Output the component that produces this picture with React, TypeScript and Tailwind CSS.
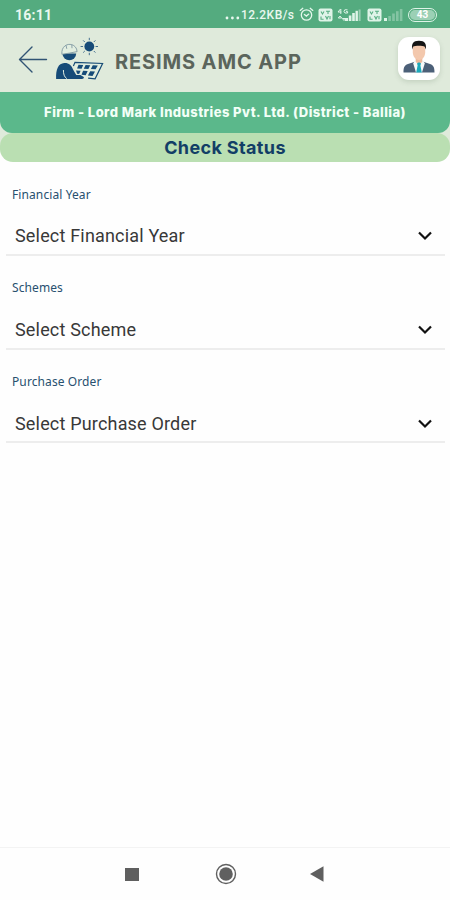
import React from 'react';

interface SelectFieldProps {
  label: string;
  placeholder: string;
}

const fields: SelectFieldProps[] = [
  { label: 'Financial Year', placeholder: 'Select Financial Year' },
  { label: 'Schemes', placeholder: 'Select Scheme' },
  { label: 'Purchase Order', placeholder: 'Select Purchase Order' },
];

function AlarmIcon() {
  return (
    <svg width="15" height="15" viewBox="0 0 15 15" fill="none" stroke="#e4f7ec" strokeWidth="1.3" strokeLinecap="round">
      <circle cx="7.5" cy="8" r="5.2" />
      <path d="M1.2 3.4 3.8 1.3M13.8 3.4l-2.6-2.1M5.4 7.4l2 1.7 2.4-2" />
    </svg>
  );
}

function VolteIcon() {
  return (
    <svg width="15" height="14" viewBox="0 0 15 14">
      <rect x="0.5" y="0.5" width="14" height="13" rx="2" fill="#dff4e8" />
      <path d="M3 3.5 4.5 6 6 3.5M8 3.3h4M10 3.3V6M3 8.5v2.8h2.6M7.5 8l1.5 3 1.5-3M12 8v3.3" fill="none" stroke="#57ae82" strokeWidth="1.1" />
    </svg>
  );
}

function StatusBar() {
  return (
    <div className="flex h-7 items-center bg-[#54ab7f] pl-[15px] pr-[13px] font-['Roboto',sans-serif] text-[#e9f8ef]">
      <span className="pt-[2px] text-[14px] font-bold tracking-[0.25px]">16:11</span>
      <div className="ml-auto flex items-center pt-px">
        <svg width="16" height="12" viewBox="0 0 16 12" fill="#e9f8ef">
          <circle cx="2" cy="9" r="1.4" />
          <circle cx="7.4" cy="9" r="1.4" />
          <circle cx="12.8" cy="9" r="1.4" />
        </svg>
        <span className="mr-[3px] w-[55px] whitespace-nowrap text-[12px] font-medium tracking-[0.45px]">12.2KB/s</span>
        <AlarmIcon />
        <span className="ml-1 flex"><VolteIcon /></span>
        <span className="ml-1 flex">
          <svg width="25" height="14" viewBox="0 0 25 14" fill="#dff4e8">
            <path d="M3.5 1 1 4h3.4M3.8 1v5M10.5 1.8H7.8L7 3.4 8 5h2.6V3.6H9M3 8l-1.7 2H4.7zM7 12.5l-1.7-2H8.7z" fill="none" stroke="#dff4e8" strokeWidth="1" />
            <rect x="8" y="10" width="3" height="3" />
            <rect x="11.8" y="7.5" width="2.6" height="5.5" />
            <rect x="15.2" y="5" width="2.6" height="8" />
            <rect x="18.5" y="2.8" width="2.4" height="10.2" />
            <rect x="21.6" y="1.5" width="2" height="11.5" opacity="0.5" />
          </svg>
        </span>
        <span className="ml-[5px] flex"><VolteIcon /></span>
        <span className="ml-[2px] flex">
          <svg width="19" height="12" viewBox="0 0 19 12" fill="#dff4e8">
            <rect x="0" y="9" width="3" height="3" />
            <g opacity="0.35">
              <rect x="4.3" y="7" width="2.6" height="5" />
              <rect x="8.2" y="4.5" width="2.6" height="7.5" />
              <rect x="12" y="2.2" width="2.6" height="9.8" />
              <rect x="15.8" y="0" width="2.6" height="12" />
            </g>
          </svg>
        </span>
        <span className="ml-[5px] flex h-[14px] w-[29px] items-center justify-center rounded-full border border-[#dff4e8] p-px">
          <span className="flex h-full w-full items-center justify-center rounded-full bg-[#9bd0b5] text-[10px] font-bold leading-none text-white">43</span>
        </span>
      </div>
    </div>
  );
}

// worker holding a solar panel under the sun
function AppLogo() {
  return (
    <svg width="50" height="46" viewBox="0 0 50 46" fill="#164b78">
      <circle cx="34.3" cy="9.5" r="4.9" />
      <path d="M34.3.8v2.4M34.3 15.8v2.4M25.6 9.5H28M40.6 9.5H43M28.2 3.4l1.6 1.6M38.8 14l1.6 1.6M28.2 15.6l1.6-1.6M38.8 5l1.6-1.6" stroke="#47718f" strokeWidth="1" />
      <path d="M7.5 16.5a6.8 6.8 0 0 0 13.7 0z" />
      <path d="M6.9 17.3C5.7 4.7 21.5 4.4 22.1 14.6l-7.6 1.5z" fill="#e2eee0" stroke="#7f98a2" strokeWidth="0.9" />
      <path d="M11 8.2l.8 3.6M16.8 7.6l.2 3.6" stroke="#8aa1a8" strokeWidth="1" />
      <path d="M1.1 42C.8 32 3.3 26.4 9.3 26c4.6-.2 7.1 2 8.9 6.8l3 5.2H27c2.6 0 2.6 4 0 4z" />
      <path d="M8.4 33c0 4 .8 7 3.4 8.6" stroke="#e2eee0" strokeWidth="1" fill="none" />
      <path d="m17.8 25.2 29.8 1.3-7.5 15.3-9.5-.8-7.4-4.3z" fill="#e2eee0" />
      <path d="m18.4 29 1.6-3.7 27.6 1.2-7.5 15.3-7-.6" fill="none" stroke="#174c76" strokeWidth="1.2" />
      <path d="m23.5 27.8 4.7.2-1.6 3.7-4.5-.2zM30.6 28l4.6.2-1.8 3.7-4.6-.2zM37.8 28.3l5 .2-2.2 3.7-4.7-.2zM21 33.5l4.6.2-1.5 3.3-2-.2zM28.1 33.8l4.6.2-2 4.2-4.2-.5zM35.2 34.2l4.8.2-2.5 4.5-4.6-.4z" />
    </svg>
  );
}

function Avatar() {
  return (
    <div className="mb-[3px] flex h-[43px] w-[42px] items-end justify-center rounded-[11px] bg-white pb-[7px] shadow-[0_2px_5px_rgba(70,100,70,0.18)]">
      <svg width="32" height="33" viewBox="0 0 32 33">
        <path d="M.5 32.5c-.2-6 1.6-8 6-9l6-2h7l6 2c4.4 1 6.2 3 6 9z" fill="#4c6078" />
        <path d="m12 20.5-1.8 3 2.8 9h6l2.8-9-1.8-3z" fill="#f7fafa" />
        <path d="M12.7 17h6.6v4.8L16 25l-3.3-3.2z" fill="#ebb99c" />
        <path d="m14 23.5 2-1.2 2 1.2-.6 2 1.4 7h-5.6l1.4-7z" fill="#1caabb" />
        <path d="M9.8 7.5c0-3 2.4-4 6.2-4s6.2 1 6.2 4v4.8c0 4.5-3 7.7-6.2 7.7s-6.2-3.2-6.2-7.7z" fill="#f3c8ad" />
        <path d="M9.2 9.5C8.4 3.9 10 .9 15.8.8c6-.1 7.9 3.1 7 8.7l-1-2.8c-2-1.3-9.6-1.4-11.8 0z" fill="#151515" />
      </svg>
    </div>
  );
}

function AppHeader() {
  return (
    <header className="flex h-16 items-center bg-[#dfeadb] pl-[18px] pr-[10px]">
      <svg width="30" height="28" viewBox="0 0 30 28" fill="none" stroke="#315474" strokeWidth="1.4" strokeLinecap="round" strokeLinejoin="round">
        <path d="M28.5 13.5H1.5M14 1 1.5 13.5 14 26" />
      </svg>
      <div className="ml-[7px]"><AppLogo /></div>
      <h1 className="ml-[10px] mt-[3px] w-[200px] whitespace-nowrap font-['Inter',sans-serif] text-[20px] font-bold tracking-[0.88px] text-[#5b655c]">
        RESIMS AMC APP
      </h1>
      <div className="ml-auto"><Avatar /></div>
    </header>
  );
}

function SelectField({ label, placeholder }: SelectFieldProps) {
  return (
    <div className="flex h-[93.6px] flex-col pl-[6px] pr-[5px] pt-[23px]">
      <label className="pl-[6px] font-['Noto_Sans',sans-serif] text-[12px] leading-[18px] tracking-[0.1px] text-[#28506f]">{label}</label>
      <button className="flex flex-1 items-center justify-between border-b-2 border-[#ededed] pl-[9px] pr-[13px] pt-[15px] text-left">
        <span className="font-['Roboto',sans-serif] text-[18px] leading-6 tracking-[0.18px] text-[#383838]">{placeholder}</span>
        <svg width="14" height="10" viewBox="0 0 14 10" fill="none" stroke="#111" strokeWidth="2.2">
          <path d="m1 1.5 6 6 6-6" />
        </svg>
      </button>
    </div>
  );
}

export default function App() {
  return (
    <div className="flex h-[900px] w-full flex-col overflow-hidden bg-[#fefefe]">
      <StatusBar />
      <AppHeader />
      <div className="bg-[linear-gradient(#dfeadb_56px,#fefefe_56px)]">
        <div className="flex h-[41px] items-center justify-center rounded-b-[12px] bg-[#5bb88b] pt-px font-['Inter',sans-serif] text-[13px] font-extrabold tracking-[0.44px] text-[#f2fff7]">
          <span className="whitespace-nowrap">Firm - Lord Mark Industries Pvt. Ltd. (District - Ballia)</span>
        </div>
        <div className="flex h-[29px] items-center justify-center rounded-[13px] bg-[#badfb2] font-['Inter',sans-serif] text-[18px] font-bold tracking-[0.36px] text-[#123e66]">
          Check Status
        </div>
      </div>
      <main className="flex-1 pt-[0.6px]">
        {fields.map((field) => (
          <SelectField key={field.label} {...field} />
        ))}
      </main>
      <nav className="flex h-[53px] items-center border-t border-[#f3f3f3] pl-[125px]">
        <div className="h-[13px] w-[14px] bg-[#5f5f5f]" />
        <svg className="ml-[76px]" width="22" height="22" viewBox="0 0 22 22">
          <circle cx="11" cy="11" r="9.5" fill="none" stroke="#606060" strokeWidth="1.4" />
          <circle cx="11" cy="11" r="6.8" fill="#606060" />
        </svg>
        <svg className="ml-[73px]" width="14" height="16" viewBox="0 0 14 16" fill="#5f5f5f">
          <path d="M0 8 13.5.3v15.4z" />
        </svg>
      </nav>
    </div>
  );
}
